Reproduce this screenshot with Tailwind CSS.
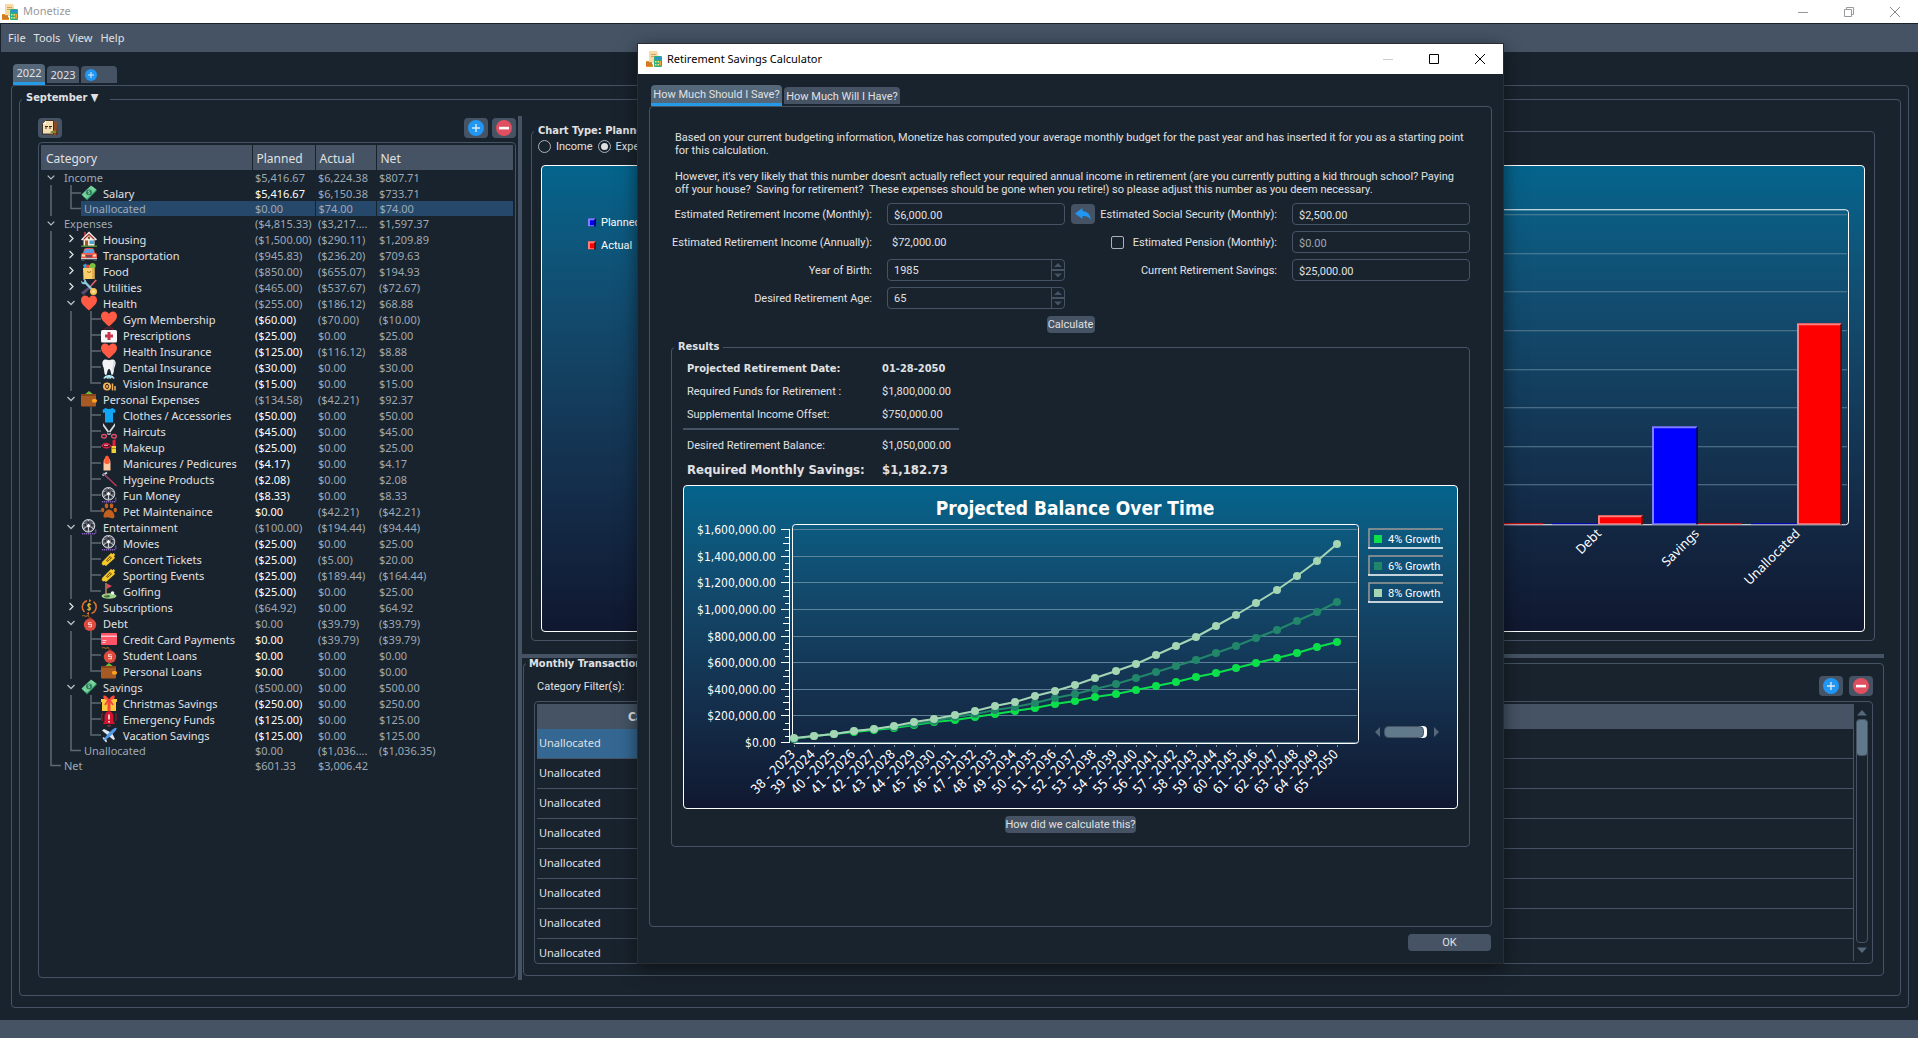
<!DOCTYPE html>
<html lang="en">
<head>
    <meta charset="utf-8">
    <meta name="viewport" content="width=device-width, initial-scale=1">
    <title>Monetize</title>
    <script src="https://cdn.jsdelivr.net/npm/@tailwindcss/browser@4"></script>
</head>
<body class="relative h-screen overflow-hidden flex flex-col bg-[#19232d] font-['Noto_Sans',sans-serif] text-[11px] text-[#e0e1e3]">

<!-- Icon sprite -->
<svg class="hidden" aria-hidden="true">
    <symbol id="i-app" viewBox="0 0 16 16"><path d="M3 0h8l1 3v9H3z" fill="#fbd9a5"/><path d="M5 3h5v1H5zM5 5h3v1H5z" fill="#c9a26c"/><path d="M0 10h3v1.500h3V14H7v2H0z" fill="#e8912d"/><path d="M0 12h6M0 14h7" stroke="#b5651d"/><rect x="8" y="5" width="8" height="11" rx="1" fill="#2fae7a"/><rect x="9" y="6" width="6" height="2.500" fill="#2d8fd5"/><path d="M9 10h1.500v1.500H9zM11.500 10H13v1.500h-1.500zM9 13h1.500v1.500H9zM11.500 13H13v1.500h-1.500z" fill="#f7e07a"/><path d="M13.500 10H15v4.500h-1.500z" fill="#f5a031"/></symbol>
    <symbol id="i-copy" viewBox="0 0 16 16"><path d="M7 1.500h8.500V15H7z" fill="#8a4b24"/><path d="M9 15h6.500V4L14 15z" fill="#5d2e12"/><path d="M3.500.5h8V14H.5V4z" fill="#f6dfb6" stroke="#2b1a0e" stroke-width=".8"/><path d="M.5 4H4V.5z" fill="#fff6e0"/><path d="M3 6.500h3M7 6.500h3M3 8h2M7 8h2" stroke="#3b2a1a"/><path d="M8 12l3-1.500h3V13H9z" fill="#7d8a2b"/></symbol>
    <symbol id="i-plus" viewBox="0 0 16 16"><circle cx="8" cy="8" r="8" fill="#2196f3"/><path d="M8 4v8M4 8h8" stroke="#d8ecfd" stroke-width="1.400"/></symbol>
    <symbol id="i-minus" viewBox="0 0 16 16"><circle cx="8" cy="8" r="8" fill="#e04f5f"/><path d="M3 6.800h10v2.600H3z" fill="#fff"/></symbol>
    <symbol id="i-cash" viewBox="0 0 16 16"><path d="M1 10.500L10.500 1 16 5.500 6 15.500z" fill="#2f8f63"/><path d="M.5 9.500L10 .5 15.500 4.500 6 14z" fill="#6fcf97"/><ellipse cx="8" cy="7.300" rx="3" ry="2.900" fill="#2a7d57"/><path d="M8.700 5.800c-2-.2-1.600 1.500-.6 1.500s1.200 1.500-.8 1.400" stroke="#b9efd0" fill="none" stroke-width=".8"/><path d="M3 10.500l1.500 1.300M11 2.500l1.500 1.300" stroke="#b9efd0" stroke-width=".8"/></symbol>
    <symbol id="i-house" viewBox="0 0 16 16"><path d="M3 1h2v4H3z" fill="#b23a3a"/><path d="M2.500 7L8 2l5.500 5v8h-11z" fill="#f3ead7"/><path d="M0 8.500L8 .5l8 8-1.200 1L8 3 1.200 9.500z" fill="#f4f4f4"/><path d="M3 8L8 3.300 13 8" stroke="#a52a2a" stroke-width="1.200" fill="none"/><rect x="4" y="9.500" width="3" height="5.500" fill="#a8552a"/><rect x="8.500" y="9.500" width="4.500" height="3.500" fill="#4aa3df"/><circle cx="8" cy="6.700" r="1.200" fill="#7a4a2a"/><path d="M0 14.500h16V16H0z" fill="#4d8b3a"/></symbol>
    <symbol id="i-car" viewBox="0 0 16 16"><path d="M3 2.500Q3.500 1 5 1h6q1.500 0 2 1.500l1.300 4.500H1.700z" fill="#e8524a"/><path d="M4 2h8l1.300 4H2.700z" fill="#5b9fe3"/><path d="M0 7.500Q0 6 1.500 6h13Q16 6 16 7.500V12H0z" fill="#ef5b50"/><path d="M1 7.500h3v2H1zM12 7.500h3v2h-3z" fill="#ffd9a0"/><path d="M5 8h6v2.500H5z" fill="#7d4347"/><path d="M0 11h16v1.300H0z" fill="#c7ccd3"/><path d="M.5 12.300h3V14h-3zM12.500 12.300h3V14h-3z" fill="#4a4f5a"/></symbol>
    <symbol id="i-food" viewBox="0 0 16 16"><path d="M2 2l3-1.500L7 5H3z" fill="#2aa6d8"/><circle cx="7" cy="3.500" r="2" fill="#e8443a"/><path d="M8 5q0-5 4-5 4 1 2 5z" fill="#7bc043"/><path d="M2 5h11.500v11H2.500z" fill="#f9cf6a"/><path d="M11 5h2.500v11H11z" fill="#e3ad49"/><path d="M6 8.500q2 2 4 0" stroke="#a8702a" fill="none"/></symbol>
    <symbol id="i-tools" viewBox="0 0 16 16"><path d="M8 7.500l1.500 1.500-7 7L0 13.500z" fill="#5b4a70"/><path d="M14.500.5l1.300 1L9.500 8.500l-1-1z" fill="#e8636a"/><path d="M0 1.500L2 3.500 3.500 2 2 0q3-.5 3.500 3L12 10l-1.500 1.500L4 5Q0 6 0 1.500z" fill="#8cc8dd"/><circle cx="12.500" cy="12.500" r="3.500" fill="#f6c453"/><circle cx="12.500" cy="12.500" r="1.500" fill="#fbe3a0"/></symbol>
    <symbol id="i-heart" viewBox="0 0 16 16"><path d="M8 15.500C3 11 0 8.500 0 5 0 2 2 .5 4 .5c2 0 3.300 1 4 2.500C8.700 1.500 10 .5 12 .5c2 0 4 1.500 4 4.500 0 3.500-3 6-8 10.500z" fill="#ff5a43"/></symbol>
    <symbol id="i-kit" viewBox="0 0 16 16"><path d="M3.500 3l1.500-2h6l1.500 2" fill="none" stroke="#7d2030" stroke-width="1.200"/><rect x="0" y="3" width="16" height="12.500" rx="1.500" fill="#f7f7f9"/><path d="M6.500 5h3v2.500H12v3H9.500V13h-3v-2.500H4v-3h2.500z" fill="#c9344b"/></symbol>
    <symbol id="i-tooth" viewBox="0 0 16 16"><path d="M1.500 3C2.500-.3 5.500.5 8 1.200 10.500.5 13.500-.3 14.500 3c.6 3-1.200 4.500-1.500 7.500-.3 3-.8 5.500-2 5.500S10 10 8 10s-1.500 6-3 6-1.700-2.500-2-5.500C2.700 7.500.9 6 1.500 3z" fill="#f1f3f5"/><path d="M13 2c1 4-1 5-1 9" stroke="#cdd5da" fill="none" stroke-width="1.200"/></symbol>
    <symbol id="i-vision" viewBox="0 0 16 16"><path d="M2 3.500Q4 0 8 0t6 3.500L11 2.500 9.500 4 8 2 6.500 4 5 2.500z" fill="#9fe0f2"/><path d="M5 .8L3.500 4M11 .8L12.500 4M8 0v4" stroke="#e8fbff" stroke-width=".8"/><circle cx="6" cy="11.500" r="4" fill="#f2b45c"/><path d="M6 9.300q-1.500 0-1.500 2T6 13.600t1.500-2.300Q7.500 9.300 6 9.300z" stroke="#3a2412" fill="none"/><path d="M11.500 8.500v7M14 11v4.500" stroke="#f2b45c" stroke-width="1.500"/></symbol>
    <symbol id="i-wallet" viewBox="0 0 16 16"><path d="M3 4l5-4 5 4z" fill="#6fbf3a"/><rect x="0" y="3" width="15" height="12.500" rx="1" fill="#a85a24"/><path d="M0 3h15v2H0z" fill="#8a451a"/><rect x="11" y="8" width="5" height="3.500" rx="1.500" fill="#ffa31a"/></symbol>
    <symbol id="i-shirt" viewBox="0 0 16 16"><path d="M4.500 1q3.500 2 7 0L14.500 3 14 6l-2-.5v10H4v-10L2 6 1.500 3z" fill="#12a5f4"/></symbol>
    <symbol id="i-scissors" viewBox="0 0 16 16"><path d="M2 0l8 11-1.500 1L2 3zM14 0L6 11l1.500 1L14 3z" fill="#d9dde2"/><ellipse cx="3" cy="13.300" rx="2.400" ry="1.800" fill="none" stroke="#e0506a" stroke-width="1.300"/><ellipse cx="13" cy="13.300" rx="2.400" ry="1.800" fill="none" stroke="#e0506a" stroke-width="1.300"/></symbol>
    <symbol id="i-makeup" viewBox="0 0 16 16"><path d="M0 7q3-4 5-3Q7 3 10.500 7 6 12.500 0 7z" fill="#d62246"/><path d="M2 7h7" stroke="#2b0a14" stroke-width="1.400"/><path d="M3 6.400h4" stroke="#fff" stroke-width=".7"/><path d="M11.500 1.500l3-1.500v7h-3z" fill="#e02040"/><rect x="10.500" y="7" width="4.500" height="7" fill="#f3d02f"/><path d="M10.500 9.500H15" stroke="#a58712"/></symbol>
    <symbol id="i-nail" viewBox="0 0 16 16"><path d="M2.500 8q0-3 1-4h5q1 1 1 4v7.500h-7z" fill="#fbc9a3"/><path d="M3.300 8Q3 1 6 .5 9 1 8.700 8 6 10 3.300 8z" fill="#ff5a35"/></symbol>
    <symbol id="i-brush" viewBox="0 0 16 16"><path d="M2 2l13.500 13" stroke="#c23b5a" stroke-width="1.300"/><path d="M1.500 4.500L6 1.500" stroke="#c9d3e0" stroke-width="2"/><path d="M2.500 3l5 5" stroke="#6a4a70" stroke-width="1.200"/></symbol>
    <symbol id="i-reel" viewBox="0 0 16 16"><circle cx="7.500" cy="6.800" r="6.500" fill="#5a5f6a"/><circle cx="7.500" cy="6.800" r="6.300" fill="none" stroke="#d5d8dd" stroke-width="1"/><path d="M7.500 1v12M2 4l11 6M13 4L2 10" stroke="#c9ccd3" stroke-width="1"/><circle cx="7.500" cy="3.500" r="1.200" fill="#22262e"/><circle cx="4.300" cy="5.700" r="1.200" fill="#22262e"/><circle cx="10.700" cy="5.700" r="1.200" fill="#22262e"/><circle cx="5.500" cy="9.700" r="1.200" fill="#22262e"/><circle cx="9.500" cy="9.700" r="1.200" fill="#22262e"/><circle cx="7.500" cy="6.800" r="1.300" fill="#fff"/><path d="M1 14.800h12q2.500-.5 1.500-4" stroke="#8b5fbf" stroke-width="1.500" stroke-dasharray="1.300 .7" fill="none"/></symbol>
    <symbol id="i-paw" viewBox="0 0 16 16"><path d="M8 6.500c3 0 5.500 4 5.500 6.700S10.500 15.500 8 14.500s-5.500 1.400-5.500-1.300S5 6.500 8 6.500z" fill="#c2611f"/><ellipse cx="5.500" cy="2.800" rx="1.800" ry="2.600" fill="#c2611f"/><ellipse cx="10.500" cy="2.800" rx="1.800" ry="2.600" fill="#c2611f"/><ellipse cx="1.700" cy="7" rx="1.700" ry="2.300" fill="#c2611f"/><ellipse cx="14.300" cy="7" rx="1.700" ry="2.300" fill="#c2611f"/></symbol>
    <symbol id="i-ticket" viewBox="0 0 16 16"><path d="M1 11l9-9 1.500 1L13 2l1 2-1 1.500 1 1.500-9 8-1.500-1-1.500.5-1.500-2 1-1z" fill="#f5c928"/><path d="M5 9.500l4-4.500 2 2-4.500 4z" fill="#7a5a10"/><path d="M6.500 9.500L9.500 6.500" stroke="#f5c928"/></symbol>
    <symbol id="i-golf" viewBox="0 0 16 16"><ellipse cx="8" cy="13" rx="7.500" ry="2.800" fill="#9fd08a"/><ellipse cx="6" cy="13.200" rx="3" ry="1.200" fill="#3d6b3a"/><path d="M5 0v13" stroke="#c79a6b" stroke-width="1.300"/><path d="M5.700.5L11 3 5.700 6z" fill="#e0485a"/><circle cx="11.500" cy="10" r="1.800" fill="#eef1f3"/></symbol>
    <symbol id="i-sub" viewBox="0 0 16 16"><path d="M3.500 13A6.600 6.600 0 0 1 6 1.800M12.500 2.600a6.600 6.600 0 0 1-2 11.600" fill="none" stroke="#e0702a" stroke-width="1.500"/><path d="M8 0l2.500 1.500L8 3.500zM8 12.700L5.500 14.500 8 16z" fill="#e0702a"/><path d="M10 5.700Q8 4.200 7 5.500 6.200 7 8 7.700t1.300 2.400Q8 11.500 6 10.100M8 4v8" stroke="#e5b52e" fill="none" stroke-width="1.100"/></symbol>
    <symbol id="i-bomb" viewBox="0 0 16 16"><path d="M1 1q2-1 3 0t3-1l1 2" stroke="#8a5a1e" fill="none" stroke-width="1.200"/><circle cx="9" cy="9.800" r="6.200" fill="#dd4b3e"/><path d="M7.500 2.500h3v2h-3z" fill="#b5392f"/><path d="M10.800 7.800H7.600v1.700h2.800v2.300H7.200" stroke="#ffd0c8" fill="none" stroke-width="1.100"/></symbol>
    <symbol id="i-card" viewBox="0 0 16 16"><rect x="0" y="2" width="16" height="12" rx="1" fill="#ff5567"/><path d="M0 4.500h16V6H0z" fill="#ffc0c8"/><path d="M1.500 9.500h4M1.500 11.500h3" stroke="#ffd5da"/></symbol>
    <symbol id="i-gift" viewBox="0 0 16 16"><path d="M0 4h16v3h-1v9H1V7H0z" fill="#ffc93c"/><path d="M6.500 4h3v12h-3z" fill="#f0463c"/><path d="M8 5Q1 5 2.500.5 6 0 8 5q2-5 5.500-4.500Q15 5 8 5z" fill="#ff4a3d"/><path d="M8 4l-4 6M8 4l4 6" stroke="#f0463c" stroke-width="1.800"/></symbol>
    <symbol id="i-bell" viewBox="0 0 16 16"><path d="M8 0q4.500 1 4.500 6v4l1.500 3H2l1.500-3V6Q3.500 1 8 0z" fill="#d4142f"/><path d="M6 14h4q-.5 2-2 2t-2-2z" fill="#7d3340"/><path d="M8 3.500v5M8 10v1.600" stroke="#fff" stroke-width="1.500"/><path d="M1.500 2Q0 6 1.500 10M14.500 2q1.500 4 0 8" stroke="#8c1c30" stroke-width="1.200" fill="none"/></symbol>
    <symbol id="i-plane" viewBox="0 0 16 16"><path d="M1 3.500L3 2l8 4 3 6-1.500 1z" fill="#dfe7ee"/><path d="M1.500 11l1-.8L5 11.500l1 3-1 1z" fill="#dfe7ee"/><path d="M2.500 13.500q2-5 9-11Q14.500 0 15.500 1q.6 1-2 4Q7 12 2.500 13.500z" fill="#4f9bea"/></symbol>
    <symbol id="i-down" viewBox="0 0 20 16"><path d="M6.500 6l3.500 3.500L13.500 6" fill="none" stroke="#b9bdc1" stroke-width="1.300"/></symbol>
    <symbol id="i-right" viewBox="0 0 20 16"><path d="M8.500 4L12 7.500 8.500 11" fill="none" stroke="#dfe1e3" stroke-width="1.300"/></symbol>
</svg>

<!-- Window title -->
<header class="flex items-center h-6 shrink-0 bg-white border-b border-[#19232d] text-[#999] pl-0.5">
    <svg class="size-4"><use href="#i-app"/></svg>
    <h1 class="ml-[5px] flex-1">Monetize</h1>
    <button class="w-[46px] flex justify-center" aria-label="Minimize"><svg class="size-[10px]" viewBox="0 0 10 10"><path d="M0 5.500h10" stroke="#999"/></svg></button>
    <button class="w-[46px] flex justify-center" aria-label="Restore"><svg class="size-[10px]" viewBox="0 0 10 10" fill="none" stroke="#999"><path d="M.5 2.500h7v7h-7zM2.500 2.500v-2h7v7h-2"/></svg></button>
    <button class="w-[46px] flex justify-center" aria-label="Close"><svg class="size-[10px]" viewBox="0 0 10 10"><path d="M0 0l10 10M10 0L0 10" stroke="#888"/></svg></button>
</header>

<!-- Menu bar -->
<nav class="flex items-center gap-2 h-7 shrink-0 bg-[#455364] border-l border-[#19232d] pl-[7px]">
    <a href="#file">File</a>
    <a href="#tools">Tools</a>
    <a href="#view">View</a>
    <a href="#help">Help</a>
</nav>

<main class="flex-1 min-h-0 flex flex-col py-3 pl-[11px] pr-[9px]">
    <!-- Year tabs -->
    <div class="flex items-end gap-[2px] h-[21px] pl-[2px] shrink-0">
        <button class="h-[21px] w-8 rounded-t bg-[#54687a] border-b-[3px] border-[#259ae9]">2022</button>
        <button class="h-[17px] w-8 mb-[2px] rounded-t bg-[#455364] leading-[17px]">2023</button>
        <button class="h-[17px] w-9 mb-[2px] rounded-t bg-[#455364] pl-1" aria-label="Add year"><svg class="size-3"><use href="#i-plus"/></svg></button>
    </div>

    <div class="flex-1 min-h-0 flex flex-col border border-[#455364] rounded pl-[7px] pr-[7px] pt-[5px] pb-[11px]">
        <fieldset class="flex-1 min-h-0 min-w-0 flex border border-[#455364] rounded pl-[18px] pr-4 pt-[9px] pb-[15px]">
            <legend class="-ml-4 px-1 h-4">
                <button class="block w-20 text-left font-bold font-['DejaVu_Sans_Condensed',sans-serif] leading-[14px]">September ▼</button>
            </legend>

            <!-- Budget tree -->
            <section class="w-[478px] shrink-0 mr-[2px] py-[2px] flex flex-col">
                <div class="flex gap-1 mb-1">
                    <button class="w-6 h-5 rounded bg-[#455364] flex items-center justify-center" aria-label="Copy budget"><svg class="size-4"><use href="#i-copy"/></svg></button>
                    <button class="ml-auto w-6 h-5 rounded bg-[#455364] flex items-center justify-center" aria-label="Add category"><svg class="size-4"><use href="#i-plus"/></svg></button>
                    <button class="w-6 h-5 rounded bg-[#455364] flex items-center justify-center" aria-label="Remove category"><svg class="size-4"><use href="#i-minus"/></svg></button>
                </div>
                <div class="flex-1 min-h-0 overflow-hidden border border-[#455364] rounded p-[2px]">
                    <table class="w-full table-fixed border-collapse whitespace-nowrap">
                        <thead>
                            <tr class="h-[25px] bg-[#455364] text-[12px] text-left">
                                <th class="w-[211px] pt-[2px] pl-[5px] font-normal border-r border-[#19232d]">Category</th>
                                <th class="w-[63px] pt-[2px] pl-1 font-normal border-r border-[#19232d]">Planned</th>
                                <th class="w-[61px] pt-[2px] pl-1 font-normal border-r border-[#19232d]">Actual</th>
                                <th class="pt-[2px] pl-1 font-normal">Net</th>
                            </tr>
                        </thead>
                        <tbody id="tree"></tbody>
                    </table>
                </div>
            </section>

            <div class="w-1 shrink-0 bg-[#455364]"></div>

            <div class="flex-1 min-w-0 grid grid-cols-1 grid-rows-[5fr_4px_3fr]">
                <!-- Budget chart -->
                <section class="min-h-0 flex pt-[7px] pl-[9px] pr-[9px] pb-[13px]">
                    <fieldset class="flex-1 min-w-0 flex flex-col border border-[#455364] rounded px-[9px] pb-2">
                        <legend class="-ml-[7px] px-1 h-4 leading-[15px] font-bold font-['DejaVu_Sans_Condensed',sans-serif]">Chart Type: Planned vs. Actual</legend>
                        <div class="flex items-center gap-[5px] h-[14px] -ml-[3px] mb-3 shrink-0 font-['Roboto',sans-serif]">
                            <input id="r-income" type="radio" name="kind" class="appearance-none size-[13px] rounded-full border border-[#acb1b6]">
                            <label for="r-income" class="pt-[2px]">Income</label>
                            <input id="r-expenses" type="radio" name="kind" checked class="appearance-none size-[13px] rounded-full border border-[#acb1b6] bg-[#e0e1e3] bg-clip-content p-[2px]">
                            <label for="r-expenses" class="pt-[2px]">Expenses</label>
                        </div>
                        <div class="flex-1 min-h-0 rounded border border-white bg-linear-to-b from-[#04648c] to-[#101830]">
                            <svg id="bars" class="w-full h-full font-['Noto_Sans',sans-serif]" viewBox="542 166 1322 464" role="img" aria-label="Planned and actual expenses"></svg>
                        </div>
                    </fieldset>
                </section>

                <div class="bg-[#455364]"></div>

                <!-- Transactions -->
                <section class="min-h-0 flex pl-px pb-1">
                    <fieldset class="flex-1 min-w-0 flex flex-col border border-[#455364] rounded px-[10px] pb-[11px] pt-[6px]">
                        <legend class="-ml-[8px] px-[3px] h-3 leading-3 font-bold font-['DejaVu_Sans_Condensed',sans-serif]">Monthly Transactions</legend>
                        <div class="flex items-center gap-[6px] h-5 mb-[5px] shrink-0">
                            <span class="pl-[3px] pt-1 font-['Roboto',sans-serif]">Category Filter(s):</span>
                            <button class="ml-auto w-6 h-5 rounded bg-[#455364] flex items-center justify-center" aria-label="Add transaction"><svg class="size-4"><use href="#i-plus"/></svg></button>
                            <button class="w-6 h-5 rounded bg-[#455364] flex items-center justify-center" aria-label="Remove transaction"><svg class="size-4"><use href="#i-minus"/></svg></button>
                        </div>
                        <div class="flex-1 min-h-0 flex border border-[#455364] rounded p-[2px]">
                            <div class="flex-1 min-w-0 overflow-hidden border-r border-[#455364]">
                                <table class="w-full table-fixed border-separate border-spacing-0">
                                    <thead>
                                        <tr class="h-[25px] bg-[#455364] text-[12px] font-bold font-['DejaVu_Sans_Condensed',sans-serif]">
                                            <th class="w-[237px] pt-[2px]">Category</th>
                                            <th></th>
                                        </tr>
                                    </thead>
                                    <tbody id="transactions"></tbody>
                                </table>
                            </div>
                            <div class="w-4 flex flex-col items-center pt-[6px] pb-2">
                                <svg class="w-[10px] h-[6px]" viewBox="0 0 10 6"><path d="M5 0l5 5.500H0z" fill="#54687a"/></svg>
                                <div class="mt-[3px] mb-1 flex-1 w-3 rounded border border-[#455364]">
                                    <div class="h-[37px] -m-px rounded border border-[#455364] bg-[#60798b]"></div>
                                </div>
                                <svg class="w-[10px] h-[6px]" viewBox="0 0 10 6"><path d="M5 6L0 .5h10z" fill="#54687a"/></svg>
                            </div>
                        </div>
                    </fieldset>
                </section>
            </div>
        </fieldset>
    </div>
</main>

<!-- Status bar -->
<footer class="h-[18px] shrink-0 bg-[#455364]"></footer>

<!-- Retirement calculator window -->
<div role="dialog" aria-labelledby="dlg-title" class="absolute left-[638px] top-11 w-[865px] h-[919px] flex flex-col bg-[#19232d] outline outline-[#2b2d33] shadow-[0_4px_18px_rgba(0,0,0,0.55)] font-['Roboto',sans-serif]">
    <div class="flex items-center h-[30px] shrink-0 bg-white text-black pl-2 font-['Noto_Sans',sans-serif]">
        <svg class="size-4"><use href="#i-app"/></svg>
        <h2 id="dlg-title" class="ml-[5px] flex-1">Retirement Savings Calculator</h2>
        <button class="w-[46px] flex justify-center" aria-label="Minimize"><svg class="size-[10px]" viewBox="0 0 10 10"><path d="M0 5.500h10" stroke="#ccc"/></svg></button>
        <button class="w-[46px] flex justify-center" aria-label="Maximize"><svg class="size-[10px]" viewBox="0 0 10 10"><path d="M.5.5h9v9h-9z" fill="none" stroke="#000"/></svg></button>
        <button class="w-[46px] flex justify-center" aria-label="Close"><svg class="size-[10px]" viewBox="0 0 10 10"><path d="M0 0l10 10M10 0L0 10" stroke="#000"/></svg></button>
    </div>

    <div class="flex-1 min-h-0 flex flex-col px-[11px] pt-[11px] pb-3">
        <div class="flex items-end gap-[2px] h-[21px] pl-[2px] shrink-0">
            <button class="h-[21px] w-[131px] pt-[2px] rounded-t bg-[#54687a] border-b-[3px] border-[#259ae9]">How Much Should I Save?</button>
            <button class="h-[17px] w-[116px] pt-[2px] mb-[2px] rounded-t bg-[#455364] leading-[15px]">How Much Will I Have?</button>
        </div>

        <div class="flex-1 min-h-0 border border-[#455364] rounded px-[21px] pt-6">
            <div class="pl-1 leading-[13px] whitespace-nowrap">
                <p>Based on your current budgeting information, Monetize has computed your average monthly budget for the past year and has inserted it for you as a starting point<br>for this calculation.</p>
                <p class="mt-[13px]">However, it's very likely that this number doesn't actually reflect your required annual income in retirement (are you currently putting a kid through school? Paying<br>off your house?&nbsp; Saving for retirement?&nbsp; These expenses should be gone when you retire!) so please adjust this number as you deem necessary.</p>
            </div>

            <form class="mt-[7px]">
                <div class="grid grid-cols-[216px_1fr_30px_197px_1fr] auto-rows-[22px] gap-y-[6px] items-center">
                    <label for="income" class="text-right pt-[2px] pr-[15px]">Estimated Retirement Income (Monthly):</label>
                    <input id="income" type="text" value="$6,000.00" class="h-[22px] w-full rounded border border-[#455364] pt-[2px] px-[6px]">
                    <button type="button" class="ml-[6px] w-6 h-5 rounded bg-[#455364] flex items-center justify-center" aria-label="Reset income"><svg class="w-4 h-3" viewBox="0 0 16 12"><path d="M0 5.500L7.500 0v3Q15 3.500 16 12 13 7.500 7.500 8v3z" fill="#2196f3"/></svg></button>
                    <label for="social" class="text-right pt-[2px] pr-[15px]">Estimated Social Security (Monthly):</label>
                    <input id="social" type="text" value="$2,500.00" class="h-[22px] w-full rounded border border-[#455364] pt-[2px] px-[6px]">

                    <span class="text-right pt-[2px] pr-[15px]">Estimated Retirement Income (Annually):</span>
                    <span class="pt-[2px] pl-[5px]">$72,000.00</span>
                    <span></span>
                    <div class="flex items-center justify-end gap-[9px] pr-[15px]">
                        <input id="has-pension" type="checkbox" aria-label="Include pension" class="appearance-none size-[13px] rounded-xs border border-[#acb1b6]">
                        <label for="pension" class="pt-[2px]">Estimated Pension (Monthly):</label>
                    </div>
                    <input id="pension" type="text" value="$0.00" disabled class="h-[22px] w-full rounded border border-[#455364] pt-[2px] px-[6px] text-[#9da9b5]">

                    <label for="birth" class="text-right pt-[2px] pr-[15px]">Year of Birth:</label>
                    <div class="flex h-[22px] rounded border border-[#455364]">
                        <input id="birth" type="text" inputmode="numeric" value="1985" class="flex-1 min-w-0 pt-[2px] px-[6px]">
                        <svg class="w-[13px] h-5 border-l border-[#455364]" viewBox="0 0 12 20"><path d="M0 10h12" stroke="#455364" stroke-width="2"/><path d="M2 7l4-4 4 4zM2 13.500l4 4 4-4z" fill="#455364"/></svg>
                    </div>
                    <span></span>
                    <label for="savings" class="text-right pt-[2px] pr-[15px]">Current Retirement Savings:</label>
                    <input id="savings" type="text" value="$25,000.00" class="h-[22px] w-full rounded border border-[#455364] pt-[2px] px-[6px]">

                    <label for="age" class="text-right pt-[2px] pr-[15px]">Desired Retirement Age:</label>
                    <div class="flex h-[22px] rounded border border-[#455364]">
                        <input id="age" type="text" inputmode="numeric" value="65" class="flex-1 min-w-0 pt-[2px] px-[6px]">
                        <svg class="w-[13px] h-5 border-l border-[#455364]" viewBox="0 0 12 20"><path d="M0 10h12" stroke="#455364" stroke-width="2"/><path d="M2 7l4-4 4 4zM2 13.500l4 4 4-4z" fill="#455364"/></svg>
                    </div>
                </div>
                <div class="mt-[7px] flex justify-center">
                    <button type="button" class="h-[17px] w-12 rounded bg-[#455364] leading-[18px]">Calculate</button>
                </div>
            </form>

            <fieldset class="mt-[7px] min-w-0 border border-[#455364] rounded px-[11px] pt-1 pb-[13px]">
                <legend class="-ml-[9px] px-1 h-[14px] leading-[14px] font-bold font-['DejaVu_Sans_Condensed',sans-serif]">Results</legend>
                <dl class="pl-1 grid grid-cols-[195px_1fr] auto-rows-[23px] items-center">
                    <dt class="font-bold font-['DejaVu_Sans_Condensed',sans-serif]">Projected Retirement Date:</dt>
                    <dd class="font-bold font-['DejaVu_Sans_Condensed',sans-serif]">01-28-2050</dd>
                    <dt>Required Funds for Retirement :</dt>
                    <dd>$1,800,000.00</dd>
                    <dt>Supplemental Income Offset:</dt>
                    <dd>$750,000.00</dd>
                </dl>
                <hr class="mt-px mb-[5px] w-[276px] border-t-2 border-[#455364]">
                <dl class="pl-1 grid grid-cols-[195px_1fr] auto-rows-[23px] items-center mb-1">
                    <dt>Desired Retirement Balance:</dt>
                    <dd>$1,050,000.00</dd>
                    <dt class="font-bold text-[13px] font-['DejaVu_Sans_Condensed',sans-serif]">Required Monthly Savings:</dt>
                    <dd class="font-bold text-[13px] font-['DejaVu_Sans_Condensed',sans-serif]">$1,182.73</dd>
                </dl>
                <div class="rounded border border-white bg-linear-to-b from-[#04648c] to-[#101830]">
                    <svg id="growth" class="w-full font-['DejaVu_Sans_Condensed',sans-serif]" viewBox="684 486 773 322" role="img" aria-label="Projected balance over time"></svg>
                </div>
                <div class="mt-[7px] flex justify-center">
                    <button type="button" class="h-[17px] rounded bg-[#455364] leading-[18px]">How did we calculate this?</button>
                </div>
            </fieldset>
        </div>

        <button class="mt-[7px] mr-px ml-auto w-[83px] h-[17px] shrink-0 rounded bg-[#455364] leading-[18px]">OK</button>
    </div>
</div>

<script>
    // guides: one character per 20px level. | line, T branch, L last branch, v open, > closed
    const rows = [
        ['v', '', 'Income', '$5,416.67', '$6,224.38', '$807.71'],
        ['|T', 'cash', 'Salary', '$5,416.67', '$6,150.38', '$733.71', 1],
        ['|L', '', 'Unallocated', '$0.00', '$74.00', '$74.00'],
        ['v', '', 'Expenses', '($4,815.33)', '($3,217....', '$1,597.37'],
        ['|>', 'house', 'Housing', '($1,500.00)', '($290.11)', '$1,209.89'],
        ['|>', 'car', 'Transportation', '($945.83)', '($236.20)', '$709.63'],
        ['|>', 'food', 'Food', '($850.00)', '($655.07)', '$194.93'],
        ['|>', 'tools', 'Utilities', '($465.00)', '($537.67)', '($72.67)'],
        ['|v', 'heart', 'Health', '($255.00)', '($186.12)', '$68.88'],
        ['||T', 'heart', 'Gym Membership', '($60.00)', '($70.00)', '($10.00)', 1],
        ['||T', 'kit', 'Prescriptions', '($25.00)', '$0.00', '$25.00', 1],
        ['||T', 'heart', 'Health Insurance', '($125.00)', '($116.12)', '$8.88', 1],
        ['||T', 'tooth', 'Dental Insurance', '($30.00)', '$0.00', '$30.00', 1],
        ['||L', 'vision', 'Vision Insurance', '($15.00)', '$0.00', '$15.00', 1],
        ['|v', 'wallet', 'Personal Expenses', '($134.58)', '($42.21)', '$92.37'],
        ['||T', 'shirt', 'Clothes / Accessories', '($50.00)', '$0.00', '$50.00', 1],
        ['||T', 'scissors', 'Haircuts', '($45.00)', '$0.00', '$45.00', 1],
        ['||T', 'makeup', 'Makeup', '($25.00)', '$0.00', '$25.00', 1],
        ['||T', 'nail', 'Manicures / Pedicures', '($4.17)', '$0.00', '$4.17', 1],
        ['||T', 'brush', 'Hygeine Products', '($2.08)', '$0.00', '$2.08', 1],
        ['||T', 'reel', 'Fun Money', '($8.33)', '$0.00', '$8.33', 1],
        ['||L', 'paw', 'Pet Maintenaince', '$0.00', '($42.21)', '($42.21)', 1],
        ['|v', 'reel', 'Entertainment', '($100.00)', '($194.44)', '($94.44)'],
        ['||T', 'reel', 'Movies', '($25.00)', '$0.00', '$25.00', 1],
        ['||T', 'ticket', 'Concert Tickets', '($25.00)', '($5.00)', '$20.00', 1],
        ['||T', 'ticket', 'Sporting Events', '($25.00)', '($189.44)', '($164.44)', 1],
        ['||L', 'golf', 'Golfing', '($25.00)', '$0.00', '$25.00', 1],
        ['|>', 'sub', 'Subscriptions', '($64.92)', '$0.00', '$64.92'],
        ['|v', 'bomb', 'Debt', '$0.00', '($39.79)', '($39.79)'],
        ['||T', 'card', 'Credit Card Payments', '$0.00', '($39.79)', '($39.79)', 1],
        ['||T', 'bomb', 'Student Loans', '$0.00', '$0.00', '$0.00', 1],
        ['||L', 'wallet', 'Personal Loans', '$0.00', '$0.00', '$0.00', 1],
        ['|v', 'cash', 'Savings', '($500.00)', '$0.00', '$500.00'],
        ['||T', 'gift', 'Christmas Savings', '($250.00)', '$0.00', '$250.00', 1],
        ['||T', 'bell', 'Emergency Funds', '($125.00)', '$0.00', '$125.00', 1],
        ['||L', 'plane', 'Vacation Savings', '($125.00)', '$0.00', '$125.00', 1],
        ['|L', '', 'Unallocated', '$0.00', '($1,036....', '($1,036.35)'],
        ['L', '', 'Net', '$601.33', '$3,006.42', ''],
    ];

    const lines = { '|': 'M10 0v16', 'T': 'M10 0v16M10 8h10', 'L': 'M10 0v8h10' };
    const guide = c => {
        if (c === 'v') return '<svg class="w-5 h-full shrink-0"><use href="#i-down"/></svg>';
        if (c === '>') return '<svg class="w-5 h-full shrink-0"><use href="#i-right"/></svg>';
        return `<svg class="w-5 h-full shrink-0" viewBox="0 0 20 16" preserveAspectRatio="none"><path d="${lines[c]}" fill="none" stroke="#5f6a70" stroke-width="1.500"/></svg>`;
    };

    document.getElementById('tree').innerHTML = rows.map(([g, icon, name, planned, actual, net, leaf], i) => {
        const sel = i === 2;
        const h = icon ? 'h-4' : 'h-[15px]';
        const pad = icon ? 'pt-px' : 'pt-0';
        const bg = sel ? 'bg-[#26486b]' : '';
        const cell = sel ? 'bg-[#26486b] border-r border-[#19232d]' : '';
        const label = icon
            ? `<svg class="size-4 shrink-0"><use href="#i-${icon}"/></svg><span class="pl-[6px] pt-px">${name}</span>`
            : `<span class="flex-1 pl-[3px] text-[#9da9b5] ${bg}">${name}</span>`;
        return `<tr class="${h} leading-[15px] text-[#9da9b5]">
            <td class="p-0"><div class="flex ${h} text-[#e0e1e3]">${[...g].map(guide).join('')}${label}</div></td>
            <td class="pl-[3px] ${pad} ${cell} ${leaf ? 'text-white' : ''}">${planned}</td>
            <td class="pl-[3px] ${pad} ${cell}">${actual}</td>
            <td class="pl-[3px] ${pad} ${bg}">${net}</td>
        </tr>`;
    }).join('');

    document.getElementById('transactions').innerHTML = Array.from({ length: 8 }, (_, i) =>
        `<tr class="h-[30px]"><td class="pl-[2px] pt-px border-b border-[#455364] ${i ? '' : 'bg-[#346792]'}">Unallocated</td><td class="border-b border-[#455364]"></td></tr>`
    ).join('');

    // Planned vs actual bars
    const bar = (x, y, w, h, fill, light, dark) =>
        `<rect x="${x}" y="${y}" width="${w}" height="${h}" fill="${dark}"/>
         <path d="M${x} ${y + h}V${y}H${x + w}l-2 2V${y + h}z" fill="${light}"/>
         <rect x="${x + 2}" y="${y + 2}" width="${w - 4}" height="${h - 3}" fill="${fill}"/>
         <path d="M${x + w - 2} ${y + 2}l2-2v${h}h-2z" fill="${dark}"/>`;
    const red = ['#f00', '#ff8080', '#800000'];
    const blue = ['#00f', '#8080ff', '#000080'];
    let b = '';
    [214, 253, 291, 330, 369, 407, 446, 484].forEach(y => b += `<path d="M660 ${y + .5}H1847" stroke="#6b8fa3" stroke-opacity=".8"/>`);
    b += '<rect x="660.500" y="209.500" width="1188" height="315" rx="3" fill="none" stroke="#fff"/>';
    b += '<path d="M1503 523.500h40M1698 523.500h44" stroke="#f00"/><path d="M1552 523.500h46M1751 523.500h46" stroke="#00c"/>';
    b += bar(1598, 515, 45, 9, ...red) + bar(1652, 426, 46, 98, ...blue) + bar(1797, 323, 45, 201, ...red);
    b += bar(588, 218, 8, 8, ...blue) + bar(588, 241, 8, 8, ...red);
    b += `<g font-size="11" fill="#fff" class="font-['Roboto',sans-serif]"><text x="601" y="226">Planned</text><text x="601" y="249">Actual</text></g>`;
    [['Debt', 1602], ['Savings', 1700], ['Unallocated', 1801]].forEach(([t, x]) =>
        b += `<text x="${x}" y="534" font-size="13" fill="#fff" text-anchor="end" transform="rotate(-45 ${x} 534)">${t}</text>`);
    document.getElementById('bars').innerHTML = b;

    // Projected balance, one point per year
    const series = [
        ['#0be04b', '4% Growth', [739, 736, 734, 732, 730, 728, 725, 722, 720, 717, 714, 711, 708, 704, 701, 697, 694, 690, 686, 682, 677, 673, 668, 663, 658, 653, 647, 642]],
        ['#22866a', '6% Growth', [739, 736, 734, 731, 729, 727, 724, 721, 717, 714, 710, 707, 703, 698, 694, 689, 684, 678, 672, 666, 660, 653, 646, 638, 630, 621, 612, 602]],
        ['#a5d6b4', '8% Growth', [738, 736, 734, 731, 729, 726, 722, 719, 715, 711, 706, 702, 696, 691, 685, 678, 671, 664, 655, 646, 637, 626, 615, 603, 590, 576, 561, 544]],
    ];
    const px = i => Math.round(793.5 + i * 20.13);
    let g = '<text x="1075" y="515" font-size="19" font-weight="bold" fill="#fff" text-anchor="middle">Projected Balance Over Time</text>';
    for (let i = 0; i <= 8; i++) {
        const y = Math.round(742 - i * 26.6) + .5;
        g += `<path d="M793 ${y}H1357" stroke="#6b8fa3" stroke-opacity=".85"/><path d="M781 ${y}h8" stroke="#fff"/>`;
        g += `<text x="776" y="${y + 4}" font-size="12" fill="#fff" text-anchor="end">$${(i * 200000).toLocaleString('en-US')}.00</text>`;
        if (i < 8) [[4, 6.65], [6, 13.3], [4, 19.95]].forEach(([w, d]) => g += `<path d="M${789 - w} ${Math.round(y - d) + .5}h${w}" stroke="#fff"/>`);
    }
    g += '<path d="M789.500 529v214" stroke="#fff"/><rect x="792.500" y="524.500" width="566" height="219" rx="3" fill="none" stroke="#fff"/>';
    series.forEach(([c, name, ys], s) => {
        g += `<polyline points="${ys.map((y, i) => px(i) + ',' + y).join(' ')}" fill="none" stroke="${c}" stroke-width="2"/>`;
        ys.forEach((y, i) => g += `<circle cx="${px(i)}" cy="${y}" r="4" fill="${c}"/>`);
        const top = 528 + s * 27;
        g += `<path d="M1443 ${top + 1}H1369V${top + 20}" fill="none" stroke="#a09a98" stroke-width="1.500"/><path d="M1368 ${top + 20}h75" stroke="#fff" stroke-width="1.500"/>`;
        g += `<rect x="1374" y="${top + 7}" width="8" height="8" fill="${c}"/><text x="1388" y="${top + 15}" font-size="11" fill="#fff" class="font-['Roboto',sans-serif]">${name}</text>`;
    });
    for (let i = 0; i < 28; i++) {
        const x = px(i) + 2;
        g += `<path d="M${px(i)} 746h1" stroke="#fff"/><text x="${x}" y="755" font-size="13" fill="#fff" text-anchor="end" transform="rotate(-45 ${x} 755)">${38 + i} - ${2023 + i}</text>`;
    }
    g += '<path d="M1380 727v10l-5-5zM1434 727v10l5-5z" fill="#54687a"/><rect x="1390" y="726" width="37" height="12" rx="4" fill="#fff"/><rect x="1384.500" y="726.500" width="39" height="11" rx="4" fill="#60798b" stroke="#455364"/>';
    document.getElementById('growth').innerHTML = g;
</script>
</body>
</html>
